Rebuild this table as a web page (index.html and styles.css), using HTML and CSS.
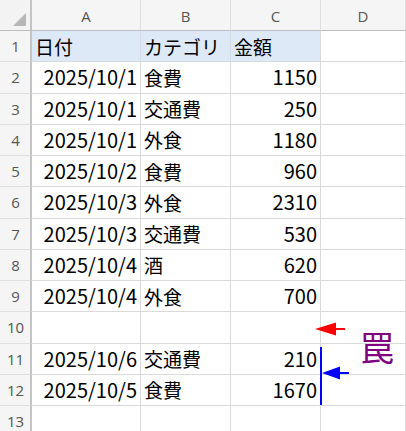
FILE: index.html
```html
<!DOCTYPE html>
<html lang="ja">
<head>
<meta charset="utf-8">
<link rel="stylesheet" href="styles.css">
</head>
<body>
<div class="sheet">
  <div class="grid">
    <div class="corner"><span class="tri"></span></div>
    <div class="ch">A</div><div class="ch">B</div><div class="ch">C</div><div class="ch">D</div>

    <div class="rh">1</div><div class="c hl">日付</div><div class="c hl">カテゴリ</div><div class="c hl">金額</div><div class="c"></div>
    <div class="rh">2</div><div class="c r">2025/10/1</div><div class="c">食費</div><div class="c r">1150</div><div class="c"></div>
    <div class="rh">3</div><div class="c r">2025/10/1</div><div class="c">交通費</div><div class="c r">250</div><div class="c"></div>
    <div class="rh">4</div><div class="c r">2025/10/1</div><div class="c">外食</div><div class="c r">1180</div><div class="c"></div>
    <div class="rh">5</div><div class="c r">2025/10/2</div><div class="c">食費</div><div class="c r">960</div><div class="c"></div>
    <div class="rh">6</div><div class="c r">2025/10/3</div><div class="c">外食</div><div class="c r">2310</div><div class="c"></div>
    <div class="rh">7</div><div class="c r">2025/10/3</div><div class="c">交通費</div><div class="c r">530</div><div class="c"></div>
    <div class="rh">8</div><div class="c r">2025/10/4</div><div class="c">酒</div><div class="c r">620</div><div class="c"></div>
    <div class="rh">9</div><div class="c r">2025/10/4</div><div class="c">外食</div><div class="c r">700</div><div class="c"></div>
    <div class="rh">10</div><div class="c"></div><div class="c"></div><div class="c"></div><div class="c"></div>
    <div class="rh">11</div><div class="c r">2025/10/6</div><div class="c">交通費</div><div class="c r">210</div><div class="c"></div>
    <div class="rh">12</div><div class="c r">2025/10/5</div><div class="c">食費</div><div class="c r">1670</div><div class="c"></div>
    <div class="rh">13</div><div class="c"></div><div class="c"></div><div class="c"></div><div class="c"></div>
  </div>
  <svg class="marks" width="406" height="431" viewBox="0 0 406 431">
    <line x1="334" y1="329" x2="345" y2="329" stroke="#ff0000" stroke-width="2"/>
    <polygon points="315,329 336,322.5 336,335.5" fill="#ff0000"/>
    <rect x="320" y="347" width="2" height="58" fill="#0000ff"/>
    <line x1="339" y1="373" x2="349" y2="373" stroke="#0000ff" stroke-width="2"/>
    <polygon points="322,373 340,366.5 340,379.5" fill="#0000ff"/>
  </svg>
  <span class="trap">罠</span>
</div>
</body>
</html>
```
FILE: styles.css
```css
html, body {
  margin: 0;
  padding: 0;
  background: #ffffff;
}
.sheet {
  position: relative;
  width: 406px;
  height: 431px;
  overflow: hidden;
}
.grid {
  display: grid;
  grid-template-columns: 32px 109px 90px 90px 1fr;
  grid-template-rows: 31px repeat(13, 31.25px);
  font-family: "Noto Sans CJK JP", sans-serif;
  font-size: 19px;
  color: #000;
}
.corner {
  position: relative;
  background: #f3f3f3;
  border-right: 2px solid #c4c4c4;
  border-bottom: 1px solid #bdbdbd;
  box-sizing: border-box;
}
.tri {
  position: absolute;
  right: 4px;
  bottom: 4px;
  width: 0;
  height: 0;
  border-left: 13px solid transparent;
  border-bottom: 13px solid #b6b6b6;
}
.ch {
  background: #f5f5f5;
  border-right: 1px solid #dedede;
  border-bottom: 1px solid #bdbdbd;
  box-sizing: border-box;
  display: flex;
  align-items: center;
  justify-content: center;
  font-family: "Open Sans", "Noto Sans", sans-serif;
  font-size: 15px;
  color: #555;
  padding-top: 2px;
}
.rh {
  background: #f5f5f5;
  border-right: 2px solid #c4c4c4;
  border-bottom: 1px solid #dedede;
  box-sizing: border-box;
  display: flex;
  align-items: center;
  justify-content: center;
  font-family: "Open Sans", "Noto Sans", sans-serif;
  font-size: 15px;
  color: #555;
  padding-left: 1px;
}
.c {
  border-right: 1px solid #dadada;
  border-bottom: 1px solid #dadada;
  box-sizing: border-box;
  display: flex;
  align-items: center;
  padding: 0 3px;
  white-space: nowrap;
  line-height: 1;
}
.c.r {
  justify-content: flex-end;
  padding-right: 3px;
  font-size: 20px;
}
.c.hl {
  background: #dde9f7;
}
.marks {
  position: absolute;
  left: 0;
  top: 0;
  pointer-events: none;
}
.trap {
  position: absolute;
  left: 360px;
  top: 330px;
  font-family: "Noto Sans CJK JP", sans-serif;
  font-size: 34px;
  line-height: 1;
  color: #800080;
}
```
